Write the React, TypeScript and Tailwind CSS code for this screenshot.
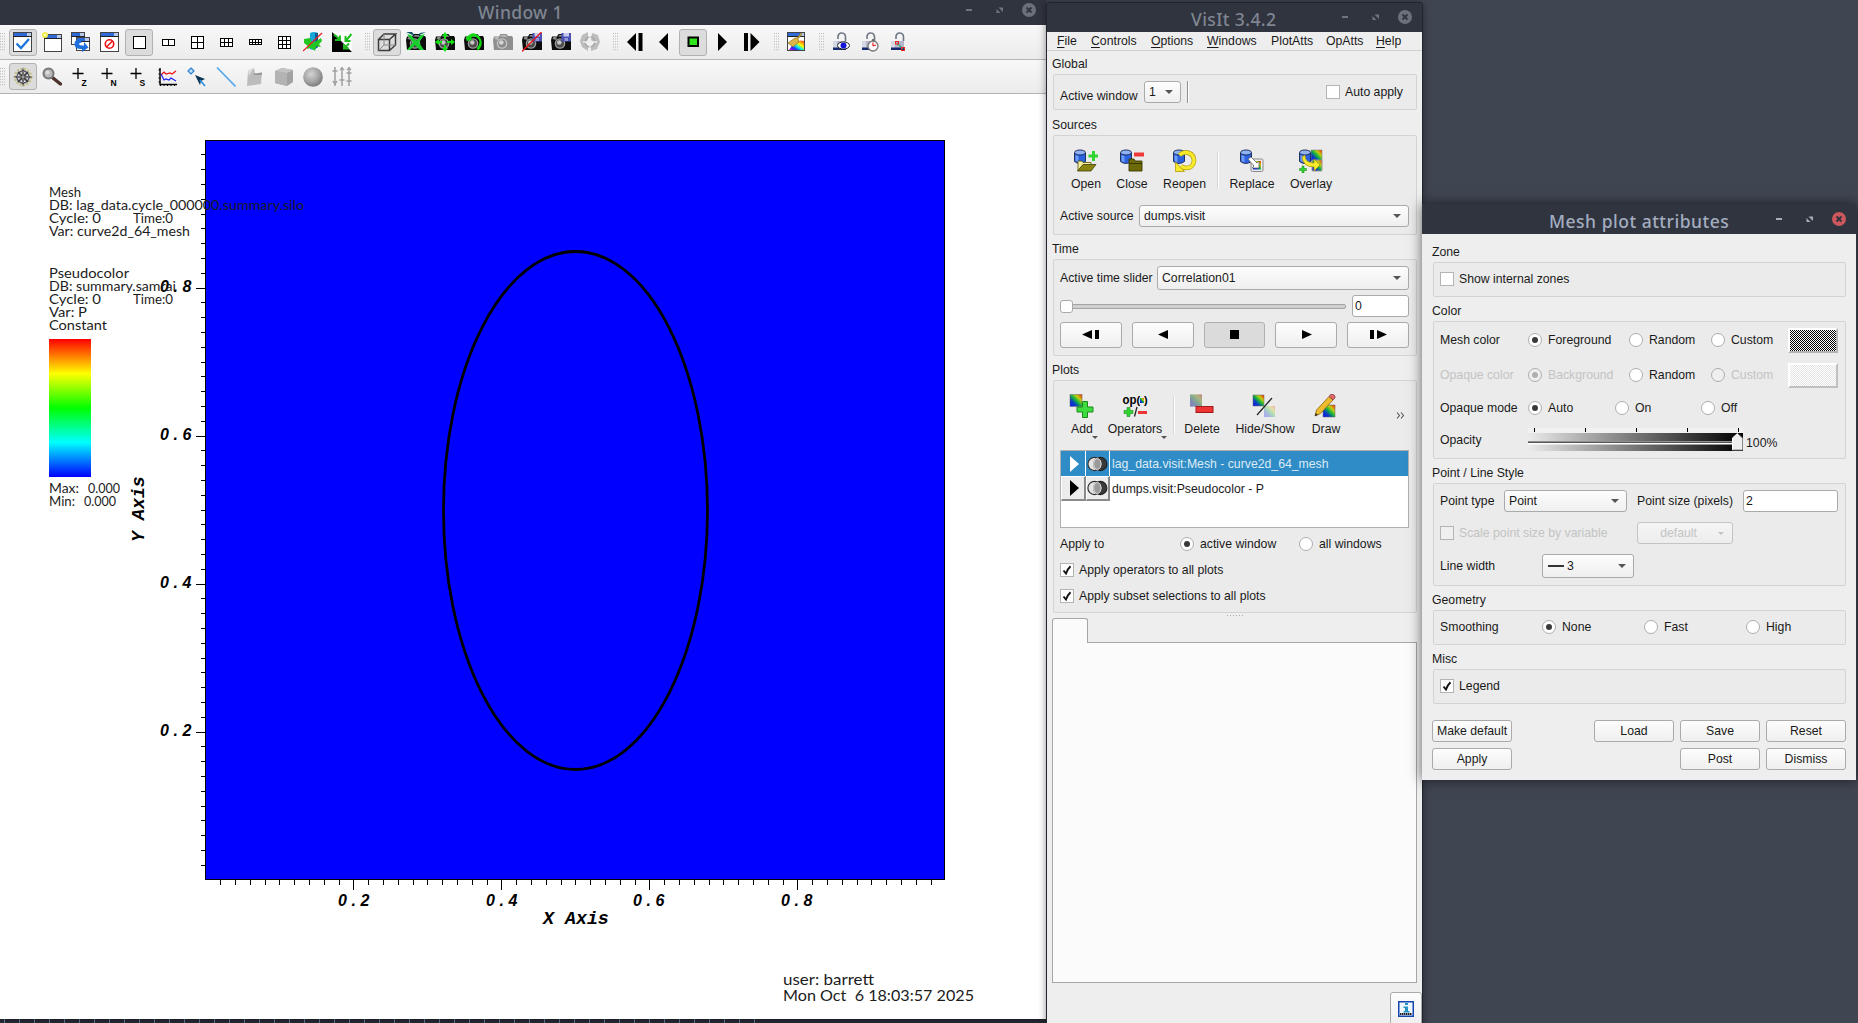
import React from 'react';

type Kids = { children?: React.ReactNode };

/* ---------- window chrome ---------- */

function TitleBar({ title, className, textClass, active }: { title: string; className: string; textClass: string; active?: boolean }) {
  const c = active ? '#a9adb8' : '#6f7480';
  return (
    <div className={`flex w-full shrink-0 bg-[#30343f] ${className}`}>
      <div className={`flex-1 whitespace-pre font-['Noto_Sans',sans-serif] text-[17.5px] leading-[24px] font-medium ${textClass}`}>{title}</div>
      <svg width="76" height="16" viewBox="0 0 76 16" className="shrink-0">
        <rect x="3" y="7" width="6" height="2" fill={c} />
        <path d="M35.500 5.500h4.500v4.500zM33.500 7v4h4z" fill={c} />
        <circle cx="66" cy="8" r="7" fill={active ? '#cc575d' : '#6b707b'} />
        <path d="M63.500 5.500l5 5m0-5l-5 5" stroke="#30343f" strokeWidth="1.800" />
      </svg>
    </div>
  );
}

function Group({ label, className, children }: Kids & { label: string; className: string }) {
  return (
    <>
      <div className="-ml-px h-6 shrink-0 pt-[7px] leading-[14px]">{label}</div>
      <div className={`flex shrink-0 flex-col rounded-[2px] border border-[#d3d3d3] bg-[#ebebeb] pr-[7px] pl-[6px] ${className}`}>{children}</div>
    </>
  );
}

function Radio({ on, disabled, label, className = '' }: { on?: boolean; disabled?: boolean; label: string; className?: string }) {
  return (
    <div className={`flex shrink-0 items-center gap-[6px] whitespace-nowrap ${disabled ? 'text-[#c3c3c3]' : ''} ${className}`}>
      <span className={`flex size-[14px] shrink-0 items-center justify-center rounded-full border border-[#adadad] ${disabled ? 'bg-[#efefef]' : 'bg-white'}`}>
        {on && <span className={`size-[6px] rounded-full ${disabled ? 'bg-[#b0b0b0]' : 'bg-[#3a3a3a]'}`} />}
      </span>
      {label}
    </div>
  );
}

function Check({ on, disabled, label }: { on?: boolean; disabled?: boolean; label: string }) {
  return (
    <div className={`flex items-center gap-[5px] whitespace-nowrap ${disabled ? 'text-[#c3c3c3]' : ''}`}>
      <span className={`flex size-[14px] shrink-0 items-center justify-center border border-[#b4b4b4] ${disabled ? 'bg-[#efefef]' : 'bg-white'}`}>
        {on && (
          <svg width="10" height="10" viewBox="0 0 10 10">
            <path d="M1.500 5.500L4 8.500Q5.500 4 8.500 1.200" fill="none" stroke="#111" strokeWidth="1.900" />
          </svg>
        )}
      </span>
      {label}
    </div>
  );
}

const raised = 'rounded-[3px] border border-[#aaaaaa] bg-linear-to-b from-[#fdfdfd] to-[#efefef]';

function Select({ className, children }: Kids & { className: string }) {
  return (
    <div className={`flex shrink-0 items-center justify-between pr-[7px] pl-[4px] ${raised} ${className}`}>
      <span className="flex items-center">{children}</span>
      <svg width="8" height="4" viewBox="0 0 8 4"><path d="M0 0h8L4 4z" fill="#555" /></svg>
    </div>
  );
}

function Button({ className = '', children }: Kids & { className?: string }) {
  return <div className={`flex items-center justify-center ${raised} ${className}`}>{children}</div>;
}

/* ---------- icons: render window toolbars ---------- */

function Ico({ children }: Kids) {
  return <svg width="20" height="20" viewBox="0 0 20 20">{children}</svg>;
}

function MiniWin({ x = 0, y = 0, w = 19, h = 20 }: { x?: number; y?: number; w?: number; h?: number }) {
  return (
    <g>
      <rect x={x + 0.5} y={y + 0.5} width={w - 1} height={h - 1} fill="#fff" stroke="#444" />
      <rect x={x + 1} y={y + 1} width={w - 2} height="3" fill="#2f6bd8" />
      <rect x={x + w - 5} y={y + 1} width="4" height="3" fill="#b8c8e8" />
      <rect x={x} y={y + 4} width={w} height="1" fill="#222" />
    </g>
  );
}

function GridIcon({ c, r, w, h }: { c: number; r: number; w: number; h: number }) {
  const x = Math.floor((20 - w) / 2) + 0.5;
  const y = Math.floor((20 - h) / 2) + 0.5;
  const cols = Array.from({ length: c - 1 }, (_, i) => Math.round(((i + 1) * w) / c));
  const rows = Array.from({ length: r - 1 }, (_, i) => Math.round(((i + 1) * h) / r));
  return (
    <Ico>
      <rect x={x} y={y} width={w} height={h} fill="#fff" stroke="#000" />
      {cols.map((v) => <path key={'c' + v} d={`M${x + v} ${y}v${h}`} stroke="#000" />)}
      {rows.map((v) => <path key={'r' + v} d={`M${x} ${y + v}h${w}`} stroke="#000" />)}
    </Ico>
  );
}

function Camera({ gray }: { gray?: boolean }) {
  const b = gray ? '#8e8e8e' : '#0c0c0c';
  return (
    <g>
      <path d="M0 8l1-3.500h5L7.500 2h6L15 4h4l1 2v12H1z" fill={b} />
      <path d="M1.500 7l1-2h3v3zM7 4.500L8.500 3H13l1 2z" fill={gray ? '#bbb' : '#8a8a8a'} />
      <circle cx="9" cy="11.500" r="5.300" fill={gray ? '#c4c4c4' : '#9b9b9b'} />
      <circle cx="9" cy="11.500" r="3.900" fill={gray ? '#8a8a8a' : '#4a4a4a'} />
      <circle cx="8.300" cy="10.500" r="2.300" fill={gray ? '#d5d5d5' : '#c4c4c4'} />
    </g>
  );
}

function Disk() {
  return (
    <g>
      <rect x="10.500" y="1" width="9.500" height="8.500" fill="#4c51b4" />
      <rect x="12.500" y="1" width="5.500" height="3.500" fill="#c9cbee" />
      <rect x="13.500" y="6" width="3.500" height="3" fill="#9598d8" />
    </g>
  );
}

function Lock({ children }: Kids) {
  return (
    <Ico>
      <path d="M7 7V4q1-3.500 4-3 3.500.500 3.500 4v4" fill="none" stroke="#6f7684" strokeWidth="1.600" />
      <path d="M2 9h13v9H2z" fill="#b4b8ca" />
      <path d="M2 9h4v7H2z" fill="#d5d7e2" />
      <path d="M2 15.500h13V18H2z" fill="#152a6e" />
      {children}
    </Ico>
  );
}

const layoutIcons = [
  <Ico><MiniWin /><path d="M3.500 11.500l4.500 4.500 8-9" fill="none" stroke="#2277dd" strokeWidth="2.400" /></Ico>,
  <Ico><MiniWin x={2} y={2} w={18} h={18} /><circle cx="3" cy="3" r="3" fill="#f3ec4a" /><circle cx="3" cy="3" r="1.200" fill="#fffcc0" /></Ico>,
  <Ico><MiniWin w={14} h={13} /><MiniWin x={5} y={5} w={14} h={14} /><path d="M10 7.500q-7-.5-6.500 5 .5 5 7.500 4.500V20l6.500-4.500L13 10v3.500q-4 .5-5-1.200 0-1.800 2.500-1.500z" fill="#1d6fdd" /></Ico>,
  <Ico><MiniWin /><circle cx="9.500" cy="12" r="4.200" fill="none" stroke="#ee1111" strokeWidth="1.600" /><path d="M6.500 15l6-6" stroke="#ee1111" strokeWidth="1.500" /></Ico>,
  <GridIcon c={1} r={1} w={12} h={12} />,
  <GridIcon c={2} r={1} w={12} h={6} />,
  <GridIcon c={2} r={2} w={12} h={12} />,
  <GridIcon c={3} r={2} w={12} h={8} />,
  <GridIcon c={4} r={2} w={12} h={5} />,
  <GridIcon c={3} r={3} w={12} h={12} />,
  <Ico><path d="M7 1q4-2 8 0v14q-4 4-8 2z" fill="#19a5d8" /><path d="M12 1h3v14l-3 2z" fill="#0b5d94" /><path d="M1 7l6-1 2 5 3-1 6-4 1 3-3 3 2 3-5-1-1 5-4-3-4 1 1-3-4-3z" fill="#22c822" /><path d="M0 19L19 1" stroke="#e81c1c" strokeWidth="1.200" /></Ico>,
  <Ico><rect width="20" height="20" fill="#fff" /><path d="M0 0l20 20H0z" fill="#000" /><path d="M2 2.500l6 5M8 3.500V8H3M19.500 2l-5 6M13.500 4v5h5M17 11.500l-4.500 4.500M12 12v4.500h5" fill="none" stroke="#1fbe1f" strokeWidth="2" /></Ico>,
];

const viewIcons = [
  <Ico><path d="M1.500 7.500h11v11h-11zM1.500 7.500L7 2h11.500l-6 5.500M18.500 2v11l-6 5.500" fill="none" stroke="#3c3c3c" strokeWidth="1.500" /><path d="M7 2v11L1.500 18.500M7 13h11.500" fill="none" stroke="#888" /></Ico>,
  <Ico><Camera /><path d="M1 2l4 1 5 6 5-6 4-1-6 8.500 5 7.500h-4l-5-5-5 5H1l6-7.500z" fill="#16cf2c" /><path d="M0 0h6l3 4zM20 0l-6 1-3 3z" fill="#0b5260" /></Ico>,
  <Ico><Camera /><path d="M10 0l3 4h-2v3H9V4H7zM10 20l-3-4h2v-3h2v3h2zM0 10l4-3v2h3v2H4v2zM20 10l-4-3v2h-4v2h4v2z" fill="#12e212" /></Ico>,
  <Ico><Camera /><path d="M3 5Q9-2 15 4q6 8-1 14.500l-1.500-2q5-5 1.500-10-4-3.500-7-.5l1.500 2-6 1-.5-6z" fill="#12d812" /></Ico>,
  <Ico><Camera gray /></Ico>,
  <Ico><Camera /><Disk /><path d="M0 19.500L19.500 0" stroke="#ee1515" strokeWidth="1.300" /></Ico>,
  <Ico><Camera /><Disk /></Ico>,
  <Ico><path d="M2 3l6-3v8l-3 3 3 3v5l-6-4-2-6zM12 1l6 2 2 7-3 7-6 2v-5l3-3-3-3z" fill="#bdbdbd" /><circle cx="10" cy="10" r="5" fill="none" stroke="#a5a5a5" strokeWidth="1.300" /><path d="M10 3v14M3 10h14" stroke="#efefef" strokeWidth="1.300" /></Ico>,
];

const playIcons = [
  <Ico><path d="M11 1v18L2 10z" fill="#000" /><rect x="13.500" y="1" width="4" height="18" fill="#000" /></Ico>,
  <Ico><path d="M14 1v18L5 10z" fill="#000" /></Ico>,
  <Ico><rect x="5.500" y="5.500" width="9.500" height="8.500" fill="#2fe51c" stroke="#000" strokeWidth="2" /></Ico>,
  <Ico><path d="M6 1v18l9-9z" fill="#000" /></Ico>,
  <Ico><rect x="3" y="1" width="4" height="18" fill="#000" /><path d="M9.500 1v18l9-9z" fill="#000" /></Ico>,
];

const colorIcon = [
  <Ico>
    <defs>
      <linearGradient id="rb" x1="0" y1="1" x2="1" y2="0"><stop offset="0" stopColor="#f0f" /><stop offset=".25" stopColor="#22f" /><stop offset=".45" stopColor="#0ee" /><stop offset=".65" stopColor="#ff0" /><stop offset="1" stopColor="#f22" /></linearGradient>
    </defs>
    <MiniWin x={1} w={18} h={19} />
    <path d="M3 18q7-12 15-9v9z" fill="url(#rb)" />
    <path d="M15 1l1 1-4 5 1 3-6 5-5-4 7-5 2 0z" fill="#dcb548" stroke="#7a5c10" strokeWidth=".6" />
  </Ico>,
];

const lockIcons = [
  <Lock><ellipse cx="12.500" cy="13.500" rx="6" ry="3.600" fill="#fff" stroke="#222" /><circle cx="12.500" cy="13.500" r="3" fill="#1414d8" /></Lock>,
  <Lock><circle cx="13" cy="14" r="5" fill="#fafafa" stroke="#777" strokeWidth="1.300" /><path d="M13 14V10.500M13 14l3-1" stroke="#e22" strokeWidth="1.200" /><path d="M12 8h2" stroke="#555" strokeWidth="1.500" /></Lock>,
  <Lock><path d="M8 11l6 6" stroke="#1fae7f" strokeWidth="1.200" /><rect x="6.500" y="9.500" width="3" height="2.500" fill="none" stroke="#e22" /><rect x="12.500" y="15.500" width="3" height="3" fill="none" stroke="#e22" /></Lock>,
];

function PlusPick({ letter }: { letter: string }) {
  return (
    <Ico>
      <path d="M1.500 6.500h11M7 1v11" stroke="#000" strokeWidth="1.300" />
      <text x="10.500" y="18.500" fontSize="8.500" fontWeight="700" fontFamily="Liberation Sans, sans-serif">{letter}</text>
    </Ico>
  );
}

const modeIcons = [
  <Ico>
    <circle cx="10" cy="10" r="8" fill="none" stroke="#c5bf86" strokeWidth="2.500" strokeDasharray="2 1.500" />
    <circle cx="10" cy="10" r="6" fill="none" stroke="#55556e" strokeWidth="1.300" />
    <path d="M10 0l1.500 8.500L20 10l-8.500 1.500L10 20l-1.500-8.500L0 10l8.500-1.500z" fill="#222" />
    <path d="M5 5l10 10M15 5L5 15" stroke="#333" strokeWidth="1.500" />
    <path d="M10 4v12M4 10h12" stroke="#ddd" strokeWidth=".8" />
  </Ico>,
  <Ico><path d="M11 11l7.500 6" stroke="#4d332b" strokeWidth="3.500" strokeLinecap="round" /><circle cx="6.500" cy="6.500" r="5" fill="#b9b9b9" stroke="#777" strokeWidth="2" /><circle cx="5.500" cy="5.500" r="2" fill="#ddd" /></Ico>,
  <PlusPick letter="Z" />,
  <PlusPick letter="N" />,
  <PlusPick letter="S" />,
  <Ico><path d="M2 1v16.500h17" fill="none" stroke="#000" strokeWidth="1.400" /><path d="M2.500 19v-2M6 19v-2M9.500 19v-2M13 19v-2M16.500 19v-2M0.500 3h2M0.500 7h2M0.500 11h2M0.500 15h2" stroke="#000" /><path d="M3 8l3-3 2 2 4-1 2 1 4-3" fill="none" stroke="#e11" strokeWidth="1.200" /><path d="M3 7l3 6 2-1 3 1 2-2 5 3" fill="none" stroke="#22e" strokeWidth="1.200" /></Ico>,
  <Ico><path d="M4 1l3 3-3 3-3-3z" fill="#bfe0fa" stroke="#2a7fd0" strokeWidth="1.200" /><path d="M8 8l10 4-4 2-1 4z" fill="#0b3350" /><path d="M13 13l5 6" stroke="#2a8fe0" strokeWidth="1.600" /></Ico>,
  <Ico><path d="M1 0.500L19.500 19.500" stroke="#53a8ee" strokeWidth="1.600" /></Ico>,
  <Ico><path d="M3 4l6-3 1 6 7-2-1 12-14 2z" fill="#bcbcbc" /><path d="M9 1l-6 3 1 5z" fill="#dadada" /><path d="M9 7h8" stroke="#777" /></Ico>,
  <Ico><path d="M1 4l7-3 11 2v12l-6 4-12-3z" fill="#a2a2a2" /><path d="M1 4l12 2v13l-12-3z" fill="#b3b3b3" /><path d="M1 4l7-3 11 2-6 3z" fill="#c4c4c4" /></Ico>,
  <Ico>
    <defs><radialGradient id="sph" cx=".4" cy=".35" r=".65"><stop offset="0" stopColor="#d4d4d4" /><stop offset=".6" stopColor="#a5a5a5" /><stop offset="1" stopColor="#7d7d7d" /></radialGradient></defs>
    <circle cx="10" cy="10" r="9.800" fill="url(#sph)" />
  </Ico>,
  <Ico><path d="M3 0v19M10 0v19M17 0v19" stroke="#a0a0a0" strokeWidth="1.500" /><path d="M.5 4h5M1 14l2 3 2-3M7.500 13h5M8 3l2-2 2 2M14.500 6h5M14.500 14h5M15 3l2-2 2 2" fill="none" stroke="#a0a0a0" strokeWidth="1.400" /></Ico>,
];

function Tool({ active, children }: Kids & { active?: boolean }) {
  return (
    <div className={`mr-px flex h-[27px] w-7 shrink-0 items-center justify-center ${active ? 'rounded-[3px] border border-[#b2b2b2] bg-[#dcdcdc]' : ''}`}>{children}</div>
  );
}

function Handle() {
  return (
    <svg width="6" height="18" viewBox="0 0 6 18" className="shrink-0">
      {Array.from({ length: 7 }, (_, i) => (
        <g key={i} fill="#b8b8b8">
          <rect x="0" y={i * 2.700} width="1" height="1" />
          <rect x="2" y={i * 2.700} width="1" height="1" />
          <rect x="4" y={i * 2.700} width="1" height="1" />
        </g>
      ))}
    </svg>
  );
}

function Tools({ icons, active }: { icons: React.ReactNode[]; active?: number[] }) {
  return <>{icons.map((ic, i) => <Tool key={i} active={active?.includes(i)}>{ic}</Tool>)}</>;
}

/* ---------- plot canvas ---------- */

function PlotText({ x, y, w, size = 13, children }: { x: number; y: number; w: number; size?: number; children: string }) {
  return (
    <text x={x} y={y} textLength={w} lengthAdjust="spacingAndGlyphs" fontSize={size} fontWeight="400" fontFamily="Lato, sans-serif" fill="#1c1c1c" xmlSpace="preserve">{children}</text>
  );
}

function Plot() {
  const ticks = Array.from({ length: 49 }, (_, i) => i + 1);
  const axisFont = { fontFamily: 'Liberation Mono, monospace', fontWeight: 700, fontStyle: 'italic', fontSize: 18.300 } as const;
  const numFont = { fontFamily: 'Liberation Sans, sans-serif', fontWeight: 700, fontStyle: 'italic', fontSize: 16 } as const;
  return (
    <svg width="1046" height="925" viewBox="0 94 1046 925" className="block bg-white">
      <defs>
        <linearGradient id="cb" x1="0" y1="0" x2="0" y2="1">
          <stop offset="0" stopColor="#f00" /><stop offset=".25" stopColor="#ff0" /><stop offset=".5" stopColor="#0f0" /><stop offset=".75" stopColor="#0ff" /><stop offset="1" stopColor="#00f" />
        </linearGradient>
      </defs>
      <rect x="205.500" y="140.500" width="739" height="739" fill="#00f" stroke="#000" />
      {ticks.map((i) => {
        const major = i % 10 === 0;
        return (
          <g key={i}>
            <rect x={major ? 196 : 201} y={Math.round(879.600 - i * 14.800)} width={major ? 9 : 4} height="1" />
            <rect x={Math.round(205.300 + i * 14.800)} y="880" width="1" height={major ? 10 : 5} />
          </g>
        );
      })}
      <ellipse cx="575.500" cy="510.500" rx="132" ry="259" fill="none" stroke="#000" strokeWidth="2.800" />
      {['0.2', '0.4', '0.6', '0.8'].map((t, i) => {
        const x = 338 + i * 148 - (i > 1 ? 1 : 0);
        return (
          <g key={t}>
            <text x="160 173.500 182.500" y={735.500 - i * 148} {...numFont}>{t}</text>
            <text x={`${x} ${x + 13.500} ${x + 22.500}`} y="905.500" {...numFont}>{t}</text>
          </g>
        );
      })}
      <text x="543" y="924" {...axisFont}>X Axis</text>
      <text transform="translate(144 542) rotate(-90)" {...axisFont}>Y Axis</text>

      <PlotText x={49} y={197} w={32}>Mesh</PlotText>
      <PlotText x={49} y={210} w={255}>DB: lag_data.cycle_000000.summary.silo</PlotText>
      <PlotText x={49} y={223} w={52}>Cycle: 0</PlotText>
      <PlotText x={133} y={223} w={40}>Time:0</PlotText>
      <PlotText x={49} y={236} w={141}>Var: curve2d_64_mesh</PlotText>
      <PlotText x={49} y={278} w={80}>Pseudocolor</PlotText>
      <PlotText x={49} y={291} w={127}>DB: summary.samrai</PlotText>
      <PlotText x={49} y={304} w={52}>Cycle: 0</PlotText>
      <PlotText x={133} y={304} w={40}>Time:0</PlotText>
      <PlotText x={49} y={317} w={38}>Var: P</PlotText>
      <PlotText x={49} y={330} w={58}>Constant</PlotText>
      <rect x="49" y="339" width="42" height="138" fill="url(#cb)" />
      <PlotText x={49} y={493} w={30}>Max:</PlotText>
      <PlotText x={88} y={493} w={32}>0.000</PlotText>
      <PlotText x={49} y={506} w={26}>Min:</PlotText>
      <PlotText x={84} y={506} w={32}>0.000</PlotText>
      <PlotText x={783} y={985} w={91} size={16}>user: barrett</PlotText>
      <PlotText x={783} y={1000.500} w={191} size={16}>Mon Oct  6 18:03:57 2025</PlotText>
    </svg>
  );
}

/* ---------- icons: control panel ---------- */

function Big({ children }: Kids) {
  return <svg width="26" height="24" viewBox="0 0 26 24" className="shrink-0">{children}</svg>;
}

function Cyl() {
  return (
    <g stroke="#15244f" strokeWidth=".9">
      <path d="M1.500 4v8.500q5 4 11 0V4z" fill="#2a62e0" />
      <path d="M2.500 6v6l3 1.500V7z" fill="#6c9bf5" stroke="none" />
      <ellipse cx="7" cy="3.500" rx="5.500" ry="2.500" fill="#8fb2f5" />
    </g>
  );
}

function Defs() {
  return (
    <svg width="0" height="0" className="absolute">
      <defs>
        <linearGradient id="hueA" x1="0" y1="1" x2="1" y2="0"><stop offset="0" stopColor="#1010ff" /><stop offset=".3" stopColor="#0a40c0" /><stop offset=".5" stopColor="#10b040" /><stop offset=".72" stopColor="#c0d010" /><stop offset="1" stopColor="#ff2000" /></linearGradient>
        <pattern id="dots" width="2" height="2" patternUnits="userSpaceOnUse"><rect width="2" height="2" fill="#fff" /><rect width="1" height="1" fill="#000" /><rect x="1" y="1" width="1" height="1" fill="#000" /></pattern>
        <pattern id="dotsLight" width="2" height="2" patternUnits="userSpaceOnUse"><rect width="2" height="2" fill="#fff" /><rect width="1" height="1" fill="#e4e4e4" /><rect x="1" y="1" width="1" height="1" fill="#e4e4e4" /></pattern>
      </defs>
    </svg>
  );
}

const icOpen = <Big><Cyl /><path d="M19 2h3v3.500h3v3h-3v3.500h-3v-3.500h-3.500v-3h3.500z" fill="#2fd62f" /><path d="M5 12h4l1 1.500h8V16H10l-5 6z" fill="#f5f0a0" stroke="#55500a" strokeWidth=".8" /><path d="M10 15.500h13l-5 6.500H4.500z" fill="#8a8410" stroke="#444005" strokeWidth=".8" /></Big>;
const icClose = <Big><Cyl /><rect x="15" y="3.500" width="10" height="4" fill="#ef3a3a" /><path d="M10 12.500V10h5l1 2h7v10H10z" fill="#6e6a08" stroke="#3a3803" strokeWidth=".9" /><path d="M10 14.500h13" stroke="#3a3803" /></Big>;
const icReopen = <Big><Cyl /><path d="M7.500 6Q12 2 17 4t5 8q-1 7-8 7-3 0-5-2" fill="none" stroke="#b59c10" strokeWidth="4.600" /><path d="M7.500 6Q12 2 17 4t5 8q-1 7-8 7-3 0-5-2" fill="none" stroke="#f6ea2a" strokeWidth="3.200" /><path d="M3.500 13v9.500h9z" fill="#f6ea2a" stroke="#b59c10" strokeWidth=".8" /></Big>;
const icReplace = <Big><Cyl /><rect x="12" y="10" width="12" height="12.500" rx="1.500" fill="#eee" stroke="#888" /><rect x="14" y="12" width="8" height="8.500" fill="url(#hueA)" /><path d="M9 10l3-2 6 6 2-2v7h-7l2-2z" fill="#fff" stroke="#666" strokeWidth=".8" /></Big>;
const icOverlay = <Big><rect x="13" y="1" width="11" height="11" fill="url(#hueA)" stroke="#888" strokeWidth=".6" /><Cyl /><rect x="14" y="11" width="10" height="11" rx="1" fill="url(#hueA)" stroke="#999" /><path d="M7 6q0 8 9 8v-4l6 6-6 6v-4Q5 18 4 8z" fill="#f6ea2a" stroke="#a08a10" strokeWidth=".7" /><path d="M4 17h2v2.500h2.500v2H6V24H4v-2.500H1.500v-2H4z" fill="#2fd62f" stroke="#158515" strokeWidth=".5" /></Big>;
const icAdd = <Big><rect x="1" y="0.500" width="12" height="12" fill="url(#hueA)" stroke="#666" strokeWidth=".5" /><path d="M13.500 7.500h5v5.500h5.500v5h-5.500v5.500h-5v-5.500H8v-5h5.500z" fill="#3fdc3f" stroke="#1b8a1b" /></Big>;
const icDelete = <Big><rect x="1" y="0.500" width="12" height="12" fill="url(#hueA)" opacity=".5" /><rect x="1" y="0.500" width="12" height="12" fill="#888" opacity=".5" /><rect x="7" y="12.500" width="17" height="6" fill="#ee3333" stroke="#a31a1a" /></Big>;
const icHide = <Big><rect x="1" y="1" width="11" height="11" fill="url(#hueA)" stroke="#666" strokeWidth=".5" /><rect x="12" y="12" width="11" height="11" fill="url(#hueA)" opacity=".3" /><path d="M20 4L5 21" stroke="#222" strokeWidth="1.200" /></Big>;
const icDraw = <Big><rect x="10" y="11" width="12" height="12" fill="url(#hueA)" stroke="#666" strokeWidth=".5" /><path d="M2 22l1.500-6L16 2.500l4 3.500L7.500 19.500z" fill="#eebb30" stroke="#8a6510" strokeWidth=".8" /><path d="M16 2.500l1.500-2h3l1.500 1.500v2L20 6z" fill="#dd6a6a" stroke="#8a3333" strokeWidth=".7" /><path d="M2 22l.8-3 2 2z" fill="#222" /></Big>;
const icOps = (
  <Big>
    <text x=".5" y="10" fontSize="12" fontWeight="700" fontFamily="Liberation Sans, sans-serif" textLength="14" lengthAdjust="spacingAndGlyphs">op</text>
    <text x="14.500" y="9.500" fontSize="11" fontWeight="700" fontFamily="Liberation Sans, sans-serif">(</text>
    <rect x="18" y="4" width="4" height="5" fill="url(#hueA)" />
    <text x="22" y="9.500" fontSize="11" fontWeight="700" fontFamily="Liberation Sans, sans-serif">)</text>
    <path d="M5 13.500h3v3h3v3H8v3H5v-3H2v-3h3z" fill="#2fd62f" stroke="#1b8a1b" strokeWidth=".6" />
    <path d="M12.500 22.500L15 13" stroke="#222" strokeWidth="1.300" />
    <rect x="16" y="17" width="9" height="3" fill="#ee3333" />
  </Big>
);

function BigTool({ icon, label, className, menu }: { icon: React.ReactNode; label: string; className: string; menu?: boolean }) {
  return (
    <div className={`flex shrink-0 flex-col items-center gap-[4px] leading-[14px] ${className}`}>
      {icon}
      <span className="relative whitespace-nowrap">
        {label}
        {menu && <svg width="6" height="3" viewBox="0 0 6 3" className="absolute -right-[5px] bottom-[-3px]"><path d="M0 0h6L3 3z" fill="#555" /></svg>}
      </span>
    </div>
  );
}

function Sep({ className }: { className: string }) {
  return <div className={`h-[37px] w-[2px] shrink-0 border-r border-white bg-[#d6d6d6] ${className}`} />;
}

function Vcr({ d, on }: { d: string; on?: boolean }) {
  return (
    <div className={`flex h-[26px] flex-1 items-center justify-center ${on ? 'rounded-[3px] border border-[#b0b0b0] bg-[#dbdbdb]' : raised}`}>
      <svg width="18" height="10" viewBox="0 0 18 10" className="-mt-px"><path d={d} fill="#000" /></svg>
    </div>
  );
}

function Rings() {
  return (
    <svg width="21" height="16" viewBox="0 0 21 16">
      <circle cx="7.500" cy="8" r="6.600" fill="#e4e4e4" stroke="#333" strokeWidth="1.200" />
      <circle cx="13.300" cy="8" r="6.600" fill="#3a3a3a" stroke="#222" strokeWidth="1.200" />
      <path d="M10.400 2a6.600 6.600 0 0 1 0 12a6.600 6.600 0 0 1 0-12z" fill="#9a9a9a" stroke="#ddd" strokeWidth="1" />
    </svg>
  );
}

function PlotRow({ name, selected }: { name: string; selected?: boolean }) {
  const cell = selected
    ? 'border-r border-white'
    : 'border-r-2 border-b-2 border-t border-l border-t-white border-l-white border-r-[#8a8a8a] border-b-[#8a8a8a] bg-[#ececec]';
  return (
    <div className={`flex h-[25px] items-center ${selected ? 'bg-[#308cc6] text-[#dcebf5]' : 'bg-white'}`}>
      <div className={`flex h-full w-[25px] items-center justify-center pl-[3px] ${cell}`}>
        <svg width="9" height="16" viewBox="0 0 9 16"><path d="M0 0l9 8-9 8z" fill={selected ? '#fff' : '#000'} /></svg>
      </div>
      <div className={`flex h-full w-[24px] items-center justify-center ${cell}`}><Rings /></div>
      <span className="pl-[2px]">{name}</span>
    </div>
  );
}

function MenuItem({ text, u, w }: { text: string; u: boolean; w: string }) {
  return (
    <span className={`shrink-0 whitespace-nowrap ${w}`}>
      {u ? <><span className="underline underline-offset-2">{text[0]}</span>{text.slice(1)}</> : text}
    </span>
  );
}

/* ---------- windows ---------- */

const barClass = 'flex shrink-0 items-center border-b border-[#b4b4b4] bg-linear-to-b from-[#f8f8f8] to-[#ececec]';

function RenderWindow() {
  return (
    <section className="absolute top-0 left-0 flex h-[1019px] w-[1046px] flex-col overflow-hidden shadow-[0_2px_8px_rgba(0,0,0,0.5)]">
      <TitleBar title="Window 1" className="h-[25px] pt-[2px] pr-[7px]" textClass="-mt-[2px] pl-[478px] text-[#7f8591] tracking-[0.35px]" />
      <div className={`h-[35px] ${barClass}`}>
        <div className="w-[9px]"><Handle /></div>
        <Tools icons={layoutIcons} active={[0, 4]} />
        <div className="ml-[8px] w-[8px]"><Handle /></div>
        <Tools icons={viewIcons} active={[0]} />
        <div className="ml-[8px] w-[8px]"><Handle /></div>
        <Tools icons={playIcons} active={[2]} />
        <div className="ml-[8px] w-[8px]"><Handle /></div>
        <Tools icons={colorIcon} />
        <div className="ml-[8px] w-[8px]"><Handle /></div>
        <Tools icons={lockIcons} />
      </div>
      <div className={`h-[34px] ${barClass}`}>
        <div className="w-[9px]"><Handle /></div>
        <Tools icons={modeIcons} active={[0]} />
      </div>
      <Plot />
    </section>
  );
}

function ControlWindow() {
  return (
    <section className="absolute top-[3px] left-[1047px] flex h-[1040px] w-[375px] flex-col rounded-t-[2px] bg-[#eeeeee] shadow-[0_0_9px_rgba(0,0,0,0.55)] outline outline-[#22252d]">
      <TitleBar title="VisIt 3.4.2" className="h-[29px] pt-[6px] pr-[7px]" textClass="-mt-[2px] pl-[144px] text-[#7f8591] tracking-[0.4px]" />
      <nav className="flex h-[19px] shrink-0 border-b border-[#d0d0d0] pt-[2px] pl-[10px] leading-[14px]">
        <MenuItem text="File" u w="w-[34px]" />
        <MenuItem text="Controls" u w="w-[60px]" />
        <MenuItem text="Options" u w="w-[56px]" />
        <MenuItem text="Windows" u w="w-[64px]" />
        <MenuItem text="PlotAtts" u={false} w="w-[55px]" />
        <MenuItem text="OpAtts" u={false} w="w-[50px]" />
        <MenuItem text="Help" u w="w-[30px]" />
      </nav>
      <div className="-mt-px flex flex-1 flex-col pr-[5px] pl-[6px]">
        <Group label="Global" className="mb-px h-[36px]">
          <div className="flex h-[34px] pt-[6px]">
            <span className="w-[84px] pt-[8px]">Active window</span>
            <Select className="h-[22px] w-[37px]">1</Select>
            <div className="mr-[137px] ml-[6px] h-[22px] w-[2px] border-r border-white bg-[#909090]" />
            <div className="flex h-[22px] items-center"><Check label="Auto apply" /></div>
          </div>
        </Group>
        <Group label="Sources" className="h-[100px]">
          <div className="flex h-[69px] pt-[13px]">
            <BigTool icon={icOpen} label="Open" className="ml-[4px] w-[44px]" />
            <BigTool icon={icClose} label="Close" className="w-[48px]" />
            <BigTool icon={icReopen} label="Reopen" className="w-[57px]" />
            <Sep className="mt-[3px] ml-[4px]" />
            <BigTool icon={icReplace} label="Replace" className="ml-[5px] w-[56px]" />
            <BigTool icon={icOverlay} label="Overlay" className="w-[62px]" />
          </div>
          <div className="flex h-[22px] items-center">
            <span className="w-[79px]">Active source</span>
            <Select className="h-[22px] w-[270px]">dumps.visit</Select>
          </div>
        </Group>
        <Group label="Time" className="h-[97px]">
          <div className="mt-[6px] flex h-[24px] items-center">
            <span className="w-[97px]">Active time slider</span>
            <Select className="h-[24px] w-[252px]">Correlation01</Select>
          </div>
          <div className="mt-[5px] flex h-[22px] items-center">
            <div className="flex w-[286px] items-center">
              <div className="z-10 size-[13px] rounded-[3px] border border-[#aaaaaa] bg-white" />
              <div className="-ml-px h-[5px] flex-1 rounded-r-[2px] border border-[#a5a5a5] bg-[#d0d0d0]" />
            </div>
            <div className="ml-[6px] flex h-[22px] w-[57px] items-center rounded-[3px] border border-[#aaaaaa] bg-white pl-[2px]">0</div>
          </div>
          <div className="mt-[5px] flex gap-[10px]">
            <Vcr d="M10 0v9L0 4.500zM13 0h4v9h-4z" />
            <Vcr d="M14 0v9L4 4.500z" />
            <Vcr d="M5 0h9v9H5z" on />
            <Vcr d="M5 0v9l10-4.500z" />
            <Vcr d="M1 0h4v9H1zM8 0v9l10-4.500z" />
          </div>
        </Group>
        <Group label="Plots" className="h-[233px]">
          <div className="flex h-[69px] pt-[13px]">
            <BigTool icon={icAdd} label="Add" className="ml-[7px] w-[30px]" menu />
            <BigTool icon={icOps} label="Operators" className="ml-[4px] w-[68px]" menu />
            <Sep className="mt-[3px] ml-[4px]" />
            <BigTool icon={icDelete} label="Delete" className="ml-[5px] w-[44px]" />
            <BigTool icon={icHide} label="Hide/Show" className="ml-[4px] w-[74px]" />
            <BigTool icon={icDraw} label="Draw" className="ml-[4px] w-[40px]" />
            <svg width="9" height="7" viewBox="0 0 9 7" className="mt-[18px] mr-[4px] ml-auto"><path d="M1 .5l2.500 3L1 6.500M5 .5l2.500 3L5 6.500" fill="none" stroke="#555" strokeWidth="1.100" /></svg>
          </div>
          <div className="h-[78px] shrink-0 border border-[#b0b0b0] bg-white">
            <PlotRow name="lag_data.visit:Mesh - curve2d_64_mesh" selected />
            <PlotRow name="dumps.visit:Pseudocolor - P" />
          </div>
          <div className="mt-[9px] flex h-[14px] shrink-0 items-center">
            <span className="w-[120px]">Apply to</span>
            <Radio on label="active window" className="w-[119px]" />
            <Radio label="all windows" />
          </div>
          <div className="mt-[12px] flex h-[14px] items-center"><Check on label="Apply operators to all plots" /></div>
          <div className="mt-[12px] flex h-[14px] items-center"><Check on label="Apply subset selections to all plots" /></div>
        </Group>
        <div className="flex h-[5px] shrink-0 items-center justify-center gap-[2px]">
          {[0, 1, 2, 3, 4, 5].map((i) => <span key={i} className="size-px bg-[#aaa]" />)}
        </div>
        <div className="z-10 -mb-px -ml-px h-[25px] w-[36px] shrink-0 rounded-t-[3px] border border-b-0 border-[#a6a6a6] bg-[#fbfbfb]" />
        <div className="-ml-px h-[341px] shrink-0 border border-[#a6a6a6] bg-[#fbfbfb]" />
        <Button className="mt-[9px] -mr-[5px] h-[34px] w-[32px] shrink-0 self-end">
          <svg width="16" height="16" viewBox="0 0 16 16">
            <rect x=".75" y=".75" width="14.500" height="14.500" fill="#eef6ff" stroke="#1546b0" strokeWidth="1.500" />
            <path d="M7 2h3v2H7zM5.500 5.500H10V10h1.500v1.500h-6V10H7V7H5.500z" fill="#2494c4" />
            <path d="M2 13h12" stroke="#222" strokeWidth="2" strokeDasharray="1.500 .5" />
          </svg>
        </Button>
      </div>
    </section>
  );
}

function Swatch({ light }: { light?: boolean }) {
  return (
    <div className={`h-[25px] w-[50px] shrink-0 self-start border-2 border-t-white border-l-white ${light ? 'border-r-[#c0c0c0] border-b-[#c0c0c0]' : 'border-r-[#b4b4b4] border-b-[#b4b4b4]'}`}>
      <svg width="46" height="21" className="block"><rect width="46" height="21" fill={light ? 'url(#dotsLight)' : 'url(#dots)'} /></svg>
    </div>
  );
}

function OpacitySlider() {
  return (
    <svg width="215" height="23" viewBox="0 0 215 23" className="shrink-0">
      <defs><linearGradient id="op"><stop offset="0" stopColor="#ebebeb" /><stop offset="1" stopColor="#000" /></linearGradient></defs>
      <rect width="215" height="5" fill="#f1f1f1" />
      {[6, 57, 108, 159, 210].map((x) => <rect key={x} x={x} y="0" width="1" height="4" />)}
      <rect y="5" width="215" height="18" fill="url(#op)" />
      <rect y="13" width="205" height="1" fill="#909090" />
      <rect y="14" width="205" height="1" fill="#555" />
      <rect y="15" width="205" height="1.500" fill="#fff" />
      <path d="M204.500 22V10l5-4.500 5 4.500v12z" fill="#eeeeee" stroke="#888" />
      <path d="M204.500 22V10l5-4.500" fill="none" stroke="#fff" />
    </svg>
  );
}

function MeshWindow() {
  return (
    <section className="absolute top-[204px] left-[1422px] flex h-[576px] w-[434px] flex-col bg-[#eeeeee] shadow-[0_0_12px_rgba(0,0,0,0.6)]">
      <TitleBar title="Mesh plot attributes" active className="h-[30px] pt-[7px] pr-[7px]" textClass="-mt-[2px] pl-[127px] text-[#a3adc0] tracking-[0.5px]" />
      <div className="flex flex-1 flex-col pt-[4px] pr-[10px] pl-[11px]">
        <Group label="Zone" className="h-[35px]">
          <div className="flex h-[32px] items-center"><Check label="Show internal zones" /></div>
        </Group>
        <Group label="Color" className="h-[138px]">
          <div className="mt-[6px] flex h-[24px] items-center">
            <span className="w-[88px]">Mesh color</span>
            <Radio on label="Foreground" className="w-[101px]" />
            <Radio label="Random" className="w-[82px]" />
            <Radio label="Custom" className="w-[77px]" />
            <Swatch />
          </div>
          <div className="mt-[11px] flex h-[24px] items-center">
            <span className="w-[88px] text-[#c3c3c3]">Opaque color</span>
            <Radio on disabled label="Background" className="w-[101px]" />
            <Radio label="Random" className="w-[82px]" />
            <Radio disabled label="Custom" className="w-[77px]" />
            <Swatch light />
          </div>
          <div className="mt-[14px] flex h-[14px] items-center">
            <span className="w-[88px]">Opaque mode</span>
            <Radio on label="Auto" className="w-[87px]" />
            <Radio label="On" className="w-[86px]" />
            <Radio label="Off" />
          </div>
          <div className="mt-[13px] flex h-[23px] items-center">
            <span className="w-[88px]">Opacity</span>
            <OpacitySlider />
            <span className="pt-[6px] pl-[3px]">100%</span>
          </div>
        </Group>
        <Group label="Point / Line Style" className="h-[103px]">
          <div className="mt-[6px] flex h-[22px] items-center">
            <span className="w-[64px]">Point type</span>
            <Select className="h-[22px] w-[123px]">Point</Select>
            <span className="w-[106px] pl-[10px] whitespace-nowrap">Point size (pixels)</span>
            <div className="ml-[10px] flex h-[22px] w-[95px] items-center rounded-[3px] border border-[#aaaaaa] bg-white pl-[2px]">2</div>
          </div>
          <div className="mt-[10px] flex h-[22px] items-center">
            <div className="w-[197px]"><Check disabled label="Scale point size by variable" /></div>
            <div className="flex h-[22px] w-[96px] items-center justify-end rounded-[3px] border border-[#c4c4c4] bg-linear-to-b from-[#f5f5f5] to-[#ededed] pr-[8px] text-[#c3c3c3]">
              default
              <svg width="6" height="3" viewBox="0 0 6 3" className="ml-[21px]"><path d="M0 0h6L3 3z" fill="#c3c3c3" /></svg>
            </div>
          </div>
          <div className="mt-[10px] flex h-[24px] items-center">
            <span className="w-[102px]">Line width</span>
            <Select className="h-[24px] w-[92px]">
              <span className="mr-[3px] ml-px h-[2px] w-[16px] bg-[#333]" />3
            </Select>
          </div>
        </Group>
        <Group label="Geometry" className="h-[35px]">
          <div className="flex h-[32px] items-center">
            <span className="w-[102px]">Smoothing</span>
            <Radio on label="None" className="w-[102px]" />
            <Radio label="Fast" className="w-[102px]" />
            <Radio label="High" />
          </div>
        </Group>
        <Group label="Misc" className="h-[35px]">
          <div className="flex h-[32px] items-center"><Check on label="Legend" /></div>
        </Group>
        <div className="mt-[16px] -ml-px grid grid-cols-[80px_1fr_80px_80px_80px] gap-x-[6px] gap-y-[6px] [grid-auto-rows:22px]">
          <Button>Make default</Button><span /><Button>Load</Button><Button>Save</Button><Button>Reset</Button>
          <Button>Apply</Button><span /><span /><Button>Post</Button><Button>Dismiss</Button>
        </div>
      </div>
    </section>
  );
}

export default function App() {
  return (
    <main className="relative h-[1023px] w-[1858px] overflow-hidden bg-[#404552] font-['Liberation_Sans',Arial,sans-serif] text-[12.25px] leading-[14px] text-[#1a1a1a]">
      <Defs />
      <div className="absolute bottom-0 left-0 h-[4px] w-[1046px] bg-[#2b2f3a]">
        <div className="h-full w-[757px] bg-[repeating-linear-gradient(90deg,#2b2f3a_0px,#2b2f3a_4px,#7391b5_4px,#7391b5_5px,#2b2f3a_5px,#2b2f3a_15px)]" />
      </div>
      <RenderWindow />
      <ControlWindow />
      <MeshWindow />
    </main>
  );
}
